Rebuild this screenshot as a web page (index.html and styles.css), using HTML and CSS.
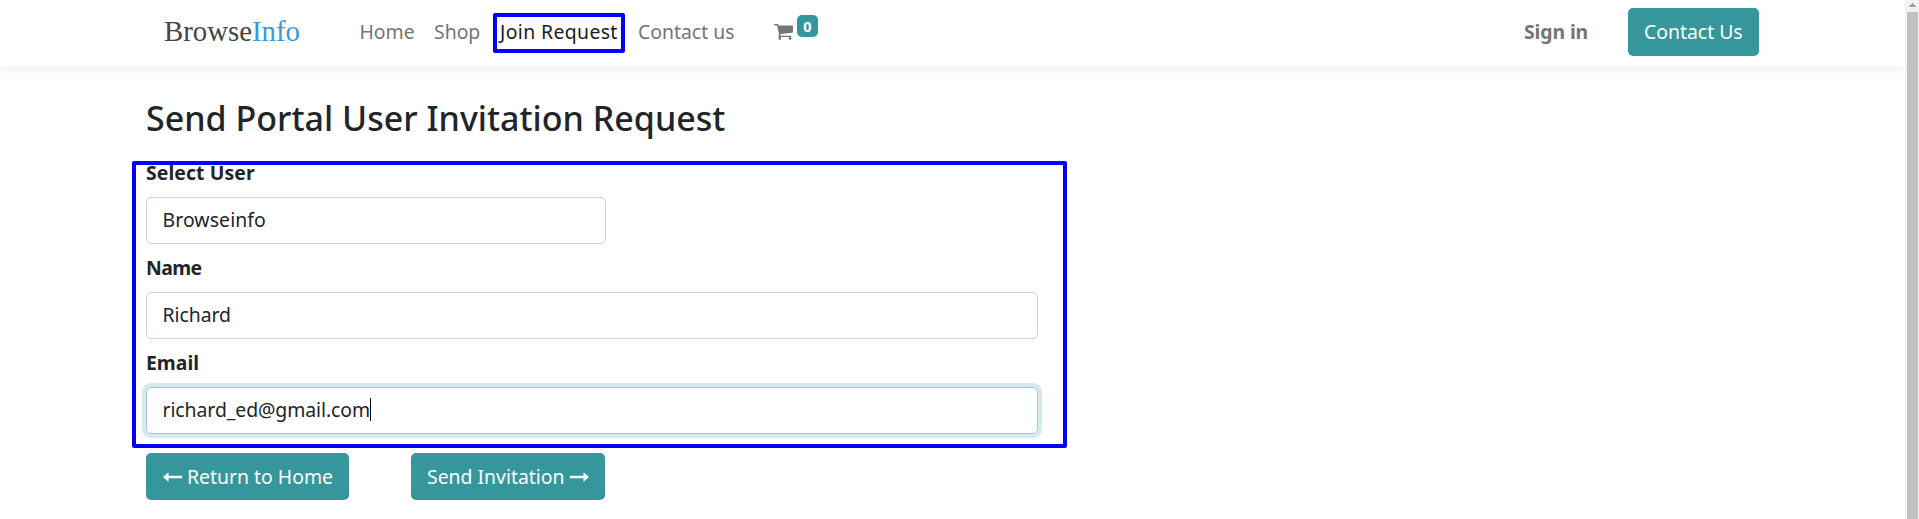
FILE: index.html
```html
<!DOCTYPE html>
<html lang="en">
<head>
<meta charset="utf-8">
<title>Send Portal User Invitation Request</title>
<link rel="stylesheet" href="styles.css">
</head>
<body>
<div class="page">
  <header class="navbar">
    <a class="logo"><span class="logo-dark">Browse</span><span class="logo-blue">Info</span></a>
    <nav class="menu">
      <a class="link home">Home</a>
      <a class="link shop">Shop</a>
      <a class="link join">Join Request</a>
      <a class="link contact">Contact us</a>
      <a class="cart">
        <svg class="cart-icon" viewBox="0 0 1664 1408"><path fill="currentColor" d="M640 1280a128 128 0 1 1-256 0 128 128 0 0 1 256 0zM1536 1280a128 128 0 1 1-256 0 128 128 0 0 1 256 0zM1664 192v512c0 32-25 60-57 64L563 890c5 22 13 46 13 70 0 23-14 44-24 64h920c35 0 64 29 64 64s-29 64-64 64H448c-35 0-64-29-64-64 0-31 45-105 61-137L268 128H64C29 128 0 99 0 64S29 0 64 0h256c67 0 69 80 79 128h1201c35 0 64 29 64 64z"/></svg>
        <span class="badge">0</span>
      </a>
    </nav>
    <a class="signin">Sign in</a>
    <a class="btn btn-contact">Contact Us</a>
  </header>
  <main class="content">
    <h2 class="title">Send Portal User Invitation Request</h2>
    <form class="form">
      <div class="group">
        <label class="label l-user">Select User</label>
        <div class="field field-short"><span class="v-user">Browseinfo</span></div>
      </div>
      <div class="group">
        <label class="label l-name">Name</label>
        <div class="field"><span class="v-name">Richard</span></div>
      </div>
      <div class="group">
        <label class="label">Email</label>
        <div class="field focused"><span class="v-email">richard_ed@gmail.com</span><i class="caret"></i></div>
      </div>
      <div class="highlight"></div>
    </form>
    <div class="actions">
      <a class="btn btn-return"><svg class="arrow" viewBox="0 0 20 10"><path fill="currentColor" d="M0 5 5.5 0.3V3.7H19.2V6.3H5.5V9.7z"/></svg><span>Return to Home</span></a>
      <a class="btn btn-send"><span>Send Invitation</span><svg class="arrow" viewBox="0 0 20 10"><path fill="currentColor" d="M20 5 14.5 0.3V3.7H.8V6.3H14.5V9.7z"/></svg></a>
    </div>
  </main>
</div>
<aside class="scrollbar"><svg class="scroll-up" viewBox="0 0 7 4"><path fill="#a3a3a3" d="M3 0h1v1h1v1h1v1h1v1H0V3h1V2h1V1h1z"/></svg><div class="thumb"></div></aside>
</body>
</html>
```
FILE: styles.css
```css
* { box-sizing: border-box; }
body {
  margin: 0;
  height: 519px;
  display: flex;
  overflow: hidden;
  background: #fff;
  color: #212529;
  font: 19.4px/30px "Noto Sans", sans-serif;
}
svg { display: block; flex: none; }
.page { flex: 1; height: 519px; overflow: hidden; }
.navbar {
  display: flex;
  height: 67px;
  padding: 8px 146px 0 164px;
  box-shadow: 0 2px 8px rgba(0, 0, 0, .08);
}
.logo {
  width: 195.5px;
  font: 28.8px/46px "Liberation Serif", serif;
  white-space: nowrap;
}
.logo-dark { color: #454545; }
.logo-blue { color: #3a99d8; }
.menu { display: flex; flex: 1; }
.link { line-height: 48px; color: #757575; white-space: nowrap; }
.home { width: 74.5px; }
.shop { width: 59px; }
.join {
  width: 132px;
  height: 40px;
  margin-top: 5px;
  padding-left: 3px;
  line-height: 30px;
  letter-spacing: .38px;
  color: #1a1a1a;
  border: 4px solid #00f;
  border-radius: 2px;
}
.contact { margin-left: 13px; width: 136px; }
.cart { display: flex; color: #757575; }
.cart-icon { width: 19px; height: 16px; margin-top: 16px; }
.badge {
  width: 21px;
  height: 22px;
  margin: 7px 0 0 4px;
  border-radius: 5px;
  background: #35979c;
  color: #fff;
  font-size: 14.5px;
  font-weight: 700;
  line-height: 23px;
  text-align: center;
}
.signin { width: 104px; line-height: 48px; font-weight: 700; letter-spacing: -.1px; color: #757575; white-space: nowrap; }
.btn {
  display: flex;
  align-items: center;
  height: 47px;
  padding: 0 16px;
  border-radius: 5px;
  background: #35979c;
  color: #fff;
  white-space: nowrap;
}
.btn-contact { width: 131px; height: 48px; }
.content { padding: 30px 0 0 146px; }
.title { margin: 0; height: 60px; font-size: 34px; line-height: 42px; font-weight: 500; letter-spacing: .02px; }
.form { position: relative; }
.group { height: 95px; }
.label { display: block; height: 40px; padding-top: 1px; font-weight: 700; }
.l-user { letter-spacing: .1px; }
.l-name { letter-spacing: -.6px; }
.field {
  display: flex;
  align-items: center;
  width: 892px;
  height: 47px;
  padding: 0 15.5px 2px;
  border: 1px solid #ced4da;
  border-radius: 5px;
}
.field-short { width: 460px; }
.v-user { letter-spacing: .1px; }
.v-name { letter-spacing: -.05px; }
.v-email { letter-spacing: -.07px; }
.focused { border-color: #a0cccf; box-shadow: 0 0 0 4px #d7eaeb; }
.caret { width: 1px; height: 23px; background: #000; }
.highlight {
  position: absolute;
  left: -14px;
  top: 4px;
  width: 935px;
  height: 287px;
  border: 4px solid #00f;
  border-radius: 2px;
}
.actions { display: flex; gap: 62px; padding-top: 11px; }
.btn-return { width: 203px; padding-left: 17px; gap: 4px; }
.btn-send { width: 194px; gap: 4px; }
.arrow { width: 20px; height: 10px; }
.scrollbar { width: 14px; background: #f1f1f1; }
.scroll-up { width: 7px; height: 4px; margin: 3px 0 5px 4px; }
.thumb { width: 11px; height: 507px; margin-left: 2px; background: #c1c1c1; }
```
